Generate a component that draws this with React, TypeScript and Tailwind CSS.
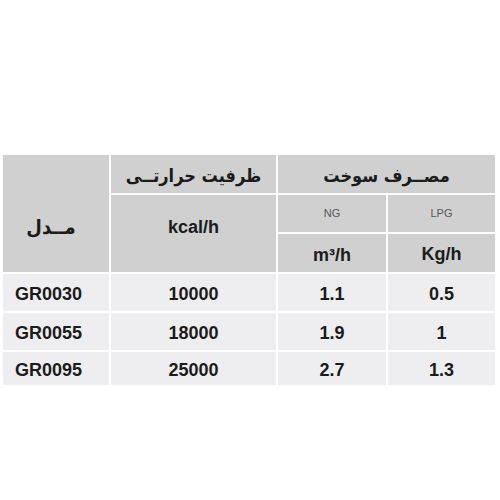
import React from "react";

const latin = { fontFamily: '"Liberation Sans", Arial, sans-serif' } as const;
const arabic = { fontFamily: '"DejaVu Sans Condensed", "DejaVu Sans", sans-serif' } as const;

export default function App() {
  const rows = [
    ["GR0030", "10000", "1.1", "0.5"],
    ["GR0055", "18000", "1.9", "1"],
    ["GR0095", "25000", "2.7", "1.3"],
  ];
  return (
    <div className="w-[500px] h-[500px] bg-white pt-[155px] pl-[3px]">
      <div
        className="grid w-[492px] gap-[2px] bg-white text-[#1b1b1b]"
        style={latin}
      >
        <div className="grid grid-cols-[106px_165px_108px_107px] grid-rows-[38px_37px_38px] gap-[2px]">
          <div className="row-span-3 bg-[#d0d0d0] flex items-center justify-center pt-[26px] pr-[10px]">
            <span dir="rtl" className="text-[20px] font-bold whitespace-nowrap" style={arabic}>
              مــدل
            </span>
          </div>
          <div className="bg-[#d0d0d0] flex items-center justify-center pt-[3px]">
            <span dir="rtl" className="text-[18px] font-bold whitespace-nowrap" style={arabic}>
              ظرفیت حرارتــی
            </span>
          </div>
          <div className="col-span-2 bg-[#d0d0d0] flex items-center justify-center pt-[3px]">
            <span dir="rtl" className="text-[18px] font-bold whitespace-nowrap" style={arabic}>
              مصــرف سوخت
            </span>
          </div>
          <div className="row-span-2 col-start-2 row-start-2 bg-[#d0d0d0] flex items-center justify-center pb-[12px]">
            <span className="text-[18px] font-bold">kcal/h</span>
          </div>
          <div className="col-start-3 row-start-2 bg-[#d0d0d0] flex items-center justify-center">
            <span className="text-[11px] text-[#555]">NG</span>
          </div>
          <div className="col-start-4 row-start-2 bg-[#d0d0d0] flex items-center justify-center">
            <span className="text-[11px] text-[#555]">LPG</span>
          </div>
          <div className="col-start-3 row-start-3 bg-[#d0d0d0] flex items-center justify-center pt-[4px]">
            <span className="text-[18px] font-bold">m³/h</span>
          </div>
          <div className="col-start-4 row-start-3 bg-[#d0d0d0] flex items-center justify-center pt-[2px]">
            <span className="text-[18px] font-bold">Kg/h</span>
          </div>
        </div>
        {rows.map((r, i) => (
          <div
            key={r[0]}
            className={
              i === 2
                ? "grid grid-cols-[106px_165px_108px_107px] h-[33px] gap-[2px]"
                : "grid grid-cols-[106px_165px_108px_107px] h-[37px] gap-[2px]"
            }
          >
            <div className="bg-[#eeeef0] flex items-center pl-[12px] pt-[3px] text-[18px] font-bold">
              {r[0]}
            </div>
            <div className="bg-[#eeeef0] flex items-center justify-center pt-[3px] text-[18px] font-bold">
              {r[1]}
            </div>
            <div className="bg-[#eeeef0] flex items-center justify-center pt-[3px] text-[18px] font-bold">
              {r[2]}
            </div>
            <div className="bg-[#eeeef0] flex items-center justify-center pt-[3px] text-[18px] font-bold">
              {r[3]}
            </div>
          </div>
        ))}
      </div>
    </div>
  );
}
